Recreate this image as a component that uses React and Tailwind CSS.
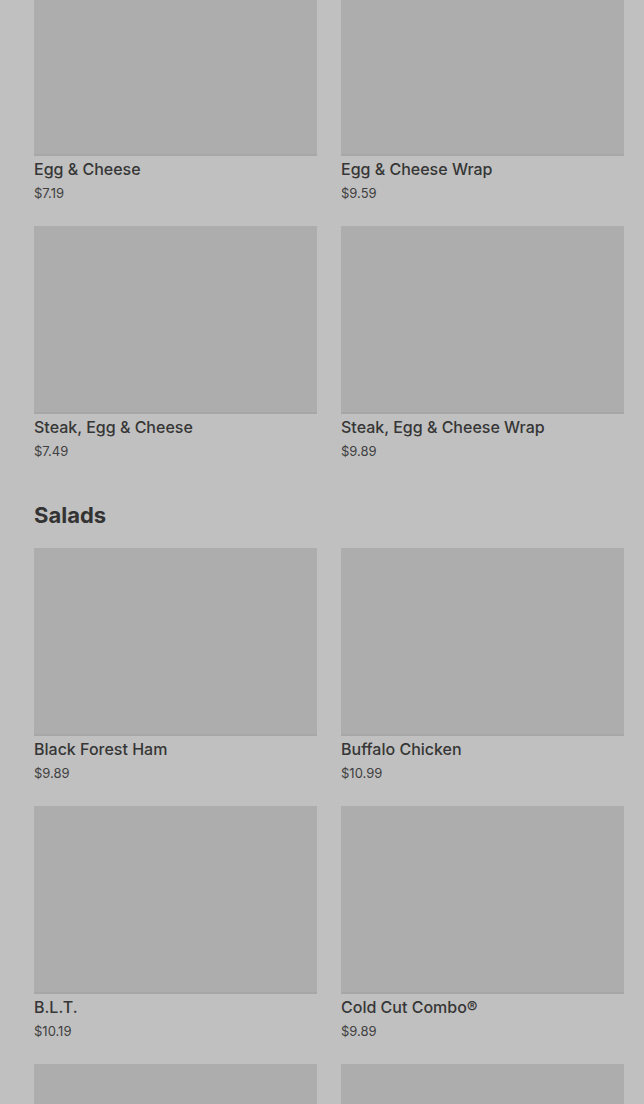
import React from "react";

const breakfast = [
  { name: "Egg & Cheese", price: "$7.19" },
  { name: "Egg & Cheese Wrap", price: "$9.59" },
  { name: "Steak, Egg & Cheese", price: "$7.49" },
  { name: "Steak, Egg & Cheese Wrap", price: "$9.89" },
];

const salads = [
  { name: "Black Forest Ham", price: "$9.89" },
  { name: "Buffalo Chicken", price: "$10.99" },
  { name: "B.L.T.", price: "$10.19" },
  { name: "Cold Cut Combo®", price: "$9.89" },
  { name: "", price: "" },
  { name: "", price: "" },
];

function Card({ item }) {
  return (
    <div className="flex flex-col">
      <div className="h-[188px] bg-[#adadad] border-b-2 border-[#a7a7a7]" />
      <div className="mt-[1px] text-[16px] leading-[24px] font-medium text-[#363636]">{item.name}</div>
      <div className="text-[13px] leading-[24px] text-[#404040]">{item.price}</div>
    </div>
  );
}

export default function App() {
  return (
    <div
      className="min-h-screen h-[1104px] overflow-hidden bg-[#c0c0c0]"
      style={{ fontFamily: "Inter, 'Noto Sans', sans-serif" }}
    >
      <div className="-mt-[32px] pl-[34px] pr-[20px]">
        <div className="grid grid-cols-2 gap-x-6 gap-y-[21px]">
          {breakfast.map((it, i) => (
            <Card key={i} item={it} />
          ))}
        </div>
        <h2 className="mt-[38px] mb-[19px] text-[22px] leading-[28px] font-bold text-[#333333]">Salads</h2>
        <div className="grid grid-cols-2 gap-x-6 gap-y-[21px]">
          {salads.map((it, i) => (
            <Card key={i} item={it} />
          ))}
        </div>
      </div>
    </div>
  );
}
